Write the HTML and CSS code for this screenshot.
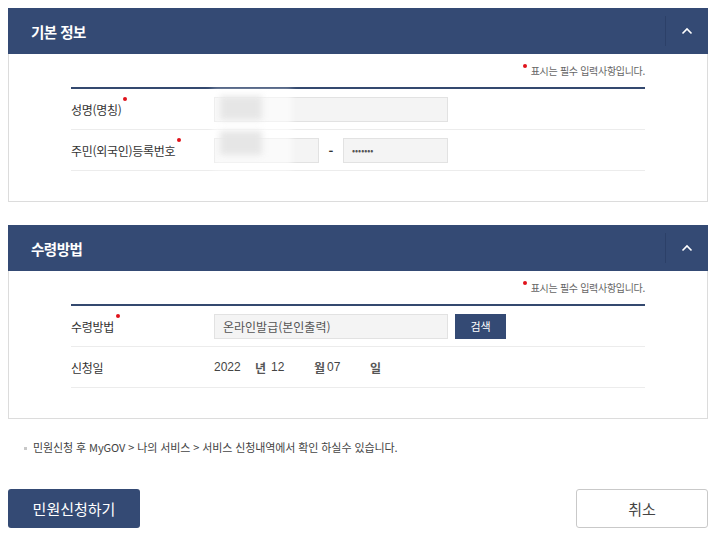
FILE: index.html
```html
<!DOCTYPE html>
<html lang="ko">
<head>
    <meta charset="UTF-8">
    <meta name="viewport" content="width=device-width, initial-scale=1.0">
    <title>민원신청</title>
    <link rel="stylesheet" href="styles.css">
</head>
<body>
    <div class="wrap">
        <!-- 기본 정보 -->
        <div class="panel">
            <div class="panel-head">
                <h2>기본 정보</h2>
                <button class="toggle" type="button" aria-label="접기">
                    <svg width="12" height="8" viewBox="0 0 12 8"><path d="M1.5 6.5 L6 2 L10.5 6.5" fill="none" stroke="#fff" stroke-width="1.6"/></svg>
                </button>
            </div>
            <div class="panel-body">
                <p class="req-note"><span class="dot"></span>표시는 필수 입력사항입니다.</p>
                <div class="form-table">
                    <div class="row">
                        <div class="label">성명(명칭)<span class="dot"></span></div>
                        <div class="field">
                            <div class="input wide"></div>
                        </div>
                    </div>
                    <div class="row">
                        <div class="label">주민(외국인)등록번호<span class="dot"></span></div>
                        <div class="field">
                            <div class="input half"></div>
                            <span class="dash">-</span>
                            <div class="input half masked">•••••••</div>
                        </div>
                    </div>
                    <div class="blur-mask">
                        <span class="blk b1"></span>
                        <span class="blk b2"></span>
                    </div>
                </div>
            </div>
        </div>

        <!-- 수령방법 -->
        <div class="panel last">
            <div class="panel-head">
                <h2>수령방법</h2>
                <button class="toggle" type="button" aria-label="접기">
                    <svg width="12" height="8" viewBox="0 0 12 8"><path d="M1.5 6.5 L6 2 L10.5 6.5" fill="none" stroke="#fff" stroke-width="1.6"/></svg>
                </button>
            </div>
            <div class="panel-body">
                <p class="req-note"><span class="dot"></span>표시는 필수 입력사항입니다.</p>
                <div class="form-table">
                    <div class="row">
                        <div class="label">수령방법<span class="dot"></span></div>
                        <div class="field">
                            <div class="input wide">온라인발급(본인출력)</div>
                            <button class="btn-search" type="button">검색</button>
                        </div>
                    </div>
                    <div class="row">
                        <div class="label">신청일</div>
                        <div class="field date">
                            <span class="num y">2022</span>
                            <span class="unit u1">년</span>
                            <span class="num m">12</span>
                            <span class="unit">월</span>
                            <span class="num d">07</span>
                            <span class="unit">일</span>
                        </div>
                    </div>
                </div>
            </div>
        </div>

        <p class="info">민원신청 후 MyGOV &gt; 나의 서비스 &gt; 서비스 신청내역에서 확인 하실수 있습니다.</p>

        <div class="actions">
            <button class="btn-primary" type="button">민원신청하기</button>
            <button class="btn-cancel" type="button">취소</button>
        </div>
    </div>
</body>
</html>
```

FILE: styles.css
```css
/* Reset default styles */
body, html, div, p, h2 {
    margin: 0;
    padding: 0;
}

body {
    font-family: "Noto Sans CJK KR", "Noto Sans", sans-serif;
    color: #333;
    background: #fff;
}

.wrap {
    width: 700px;
    padding: 8px 0 0 8px;
}

.panel {
    border: 1px solid #dcdcdc;
    border-top: 0;
    margin-bottom: 23px;
}

.panel.last {
    margin-bottom: 20px;
}

.panel-head {
    display: flex;
    align-items: center;
    justify-content: space-between;
    height: 46px;
    margin: 0 -1px;
    background: #344a74;
}

.panel-head h2 {
    padding-left: 23px;
    font-size: 14.5px;
    font-weight: 700;
    color: #fff;
    letter-spacing: -0.5px;
}

.toggle {
    display: flex;
    align-items: center;
    justify-content: center;
    width: 43px;
    height: 30px;
    padding: 0;
    border: 0;
    border-left: 1px solid #2c4068;
    background: transparent;
}

.panel-body {
    padding: 0 62px 30px 62px;
}

.req-note {
    padding-top: 9px;
    height: 24px;
    text-align: right;
    font-size: 10px;
    color: #666;
    letter-spacing: -0.3px;
}

.dot {
    display: inline-block;
    width: 4px;
    height: 4px;
    border-radius: 50%;
    background: #e0121b;
    vertical-align: top;
    margin: -2px 3px 0 2px;
}

.req-note .dot {
    margin: 1px 4px 0 0;
}

.form-table {
    position: relative;
    border-top: 2px solid #34496f;
}

.row {
    display: flex;
    align-items: center;
    height: 40px;
    border-bottom: 1px solid #ececec;
}

.label {
    width: 143px;
    font-size: 12px;
    color: #333;
    letter-spacing: -0.3px;
}

.label .dot {
    margin: -4px 0 0 2px;
}

.field {
    display: flex;
    align-items: center;
    font-size: 11.5px;
    color: #444;
}

.input {
    box-sizing: border-box;
    height: 25px;
    padding: 0 8px;
    line-height: 23px;
    border: 1px solid #e2e2e2;
    background: #f4f4f4;
    font-size: 12px;
    color: #555;
}

.input.wide {
    width: 234px;
}

.input.half {
    width: 105px;
}

.input.masked {
    font-size: 9px;
    letter-spacing: 0;
}

.dash {
    width: 24px;
    text-align: center;
    font-weight: 700;
    font-size: 13px;
    color: #333;
}

.btn-search {
    height: 25px;
    width: 51px;
    margin-left: 7px;
    border: 0;
    background: #344a74;
    color: #fff;
    font-family: inherit;
    font-size: 11px;
}

.date .num {
    font-family: "Liberation Sans", sans-serif;
    font-size: 12px;
    color: #444;
}

.date .y { width: 41px; }
.date .m { width: 43px; }
.date .d { width: 43px; }

.date .unit {
    width: 13px;
    font-size: 12px;
    font-weight: 700;
    color: #555;
}

.date .u1 { width: 16px; }

/* privacy mask over the personal fields */
.blur-mask {
    position: absolute;
    left: 141px;
    top: 0;
    width: 80px;
    height: 82px;
    background: rgba(255, 255, 255, 0.55);
    filter: blur(3px);
}

.blk {
    position: absolute;
    left: 8px;
    width: 42px;
    height: 24px;
    background: #e6e6e6;
}

.b1 { top: 7px; }
.b2 { top: 42px; }

.info {
    margin: 0 0 34px 16px;
    font-size: 11px;
    color: #444;
    letter-spacing: -0.1px;
}

.info::before {
    content: "";
    display: inline-block;
    width: 3px;
    height: 3px;
    margin: 0 6px 2px 0;
    background: #c8c8c8;
    vertical-align: middle;
}

.actions {
    display: flex;
    justify-content: space-between;
    width: 700px;
}

.btn-primary, .btn-cancel {
    width: 132px;
    height: 39px;
    border-radius: 3px;
    font-family: inherit;
    font-size: 15px;
}

.btn-primary {
    border: 0;
    background: #344a74;
    color: #fff;
}

.btn-cancel {
    border: 1px solid #c9c9c9;
    background: #fff;
    color: #444;
}
```
